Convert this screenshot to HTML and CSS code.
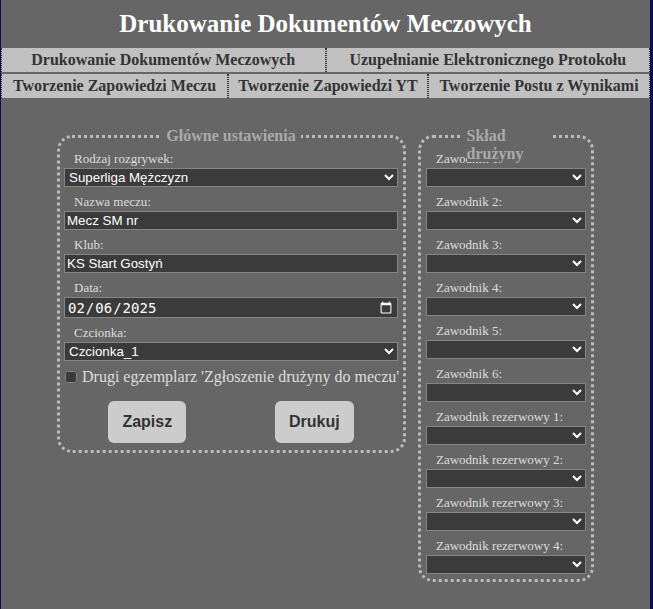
FILE: index.html
```html
<!DOCTYPE html>
<html lang="pl">
<head>
<meta charset="utf-8">
<title>Drukowanie Dokumentów Meczowych</title>
<link rel="stylesheet" href="styles.css">
</head>
<body>
<div class="page">
  <h1 class="title">Drukowanie Dokumentów Meczowych</h1>
  <nav class="tabs">
    <div class="tab-row tab-row-two">
      <button class="tab">Drukowanie Dokumentów Meczowych</button>
      <button class="tab">Uzupełnianie Elektronicznego Protokołu</button>
    </div>
    <div class="tab-row tab-row-three">
      <button class="tab">Tworzenie Zapowiedzi Meczu</button>
      <button class="tab">Tworzenie Zapowiedzi YT</button>
      <button class="tab">Tworzenie Postu z Wynikami</button>
    </div>
  </nav>
  <main class="panels">
    <fieldset class="panel panel-main">
      <legend class="panel-title"><span class="panel-title-text">Główne ustawienia</span></legend>
      <div class="field">
        <label class="field-label">Rodzaj rozgrywek:</label>
        <select class="control"><option>Superliga Mężczyzn</option></select>
      </div>
      <div class="field">
        <label class="field-label">Nazwa meczu:</label>
        <input class="control" type="text" value="Mecz SM nr">
      </div>
      <div class="field">
        <label class="field-label">Klub:</label>
        <input class="control" type="text" value="KS Start Gostyń">
      </div>
      <div class="field">
        <label class="field-label">Data:</label>
        <input class="control control-date" type="date" value="2025-02-06">
      </div>
      <div class="field">
        <label class="field-label">Czcionka:</label>
        <select class="control"><option>Czcionka_1</option></select>
      </div>
      <label class="check"><input class="check-box" type="checkbox">Drugi egzemplarz 'Zgłoszenie drużyny do meczu'</label>
      <div class="actions">
        <button class="action">Zapisz</button>
        <button class="action">Drukuj</button>
      </div>
    </fieldset>
    <fieldset class="panel panel-team">
      <legend class="panel-title panel-title-narrow"><span class="panel-title-text">Skład drużyny</span></legend>
      <div class="field"><label class="field-label">Zawodnik 1:</label><select class="control"><option></option></select></div>
      <div class="field"><label class="field-label">Zawodnik 2:</label><select class="control"><option></option></select></div>
      <div class="field"><label class="field-label">Zawodnik 3:</label><select class="control"><option></option></select></div>
      <div class="field"><label class="field-label">Zawodnik 4:</label><select class="control"><option></option></select></div>
      <div class="field"><label class="field-label">Zawodnik 5:</label><select class="control"><option></option></select></div>
      <div class="field"><label class="field-label">Zawodnik 6:</label><select class="control"><option></option></select></div>
      <div class="field"><label class="field-label">Zawodnik rezerwowy 1:</label><select class="control"><option></option></select></div>
      <div class="field"><label class="field-label">Zawodnik rezerwowy 2:</label><select class="control"><option></option></select></div>
      <div class="field"><label class="field-label">Zawodnik rezerwowy 3:</label><select class="control"><option></option></select></div>
      <div class="field"><label class="field-label">Zawodnik rezerwowy 4:</label><select class="control"><option></option></select></div>
    </fieldset>
  </main>
</div>
</body>
</html>
```

FILE: styles.css
```css
html, body {
  margin: 0;
  padding: 0;
}

body {
  background: #0b0b57;
  font-family: "Liberation Serif", "Times New Roman", serif;
}

.page {
  background: #666666;
  margin: 0 3px 0 1px;
  min-height: 100vh;
  overflow: hidden;
}

.title {
  margin: 0;
  padding: 9px 0 10px;
  text-align: center;
  color: #ffffff;
  font-size: 25px;
  font-weight: bold;
  line-height: 29px;
}

.tabs {
  display: flex;
  flex-direction: column;
  gap: 2px;
}

.tab-row {
  display: grid;
}

.tab-row-two {
  grid-template-columns: 1fr 1fr;
}

.tab-row-three {
  grid-template-columns: 227fr 200fr 222fr;
}

.tab {
  font-family: "Liberation Serif", "Times New Roman", serif;
  font-size: 16px;
  font-weight: bold;
  color: #333333;
  background: #c0c0c0;
  border: 0;
  border-left: 1px dotted #333333;
  border-right: 1px dotted #333333;
  height: 24px;
  padding: 0;
  margin: 0;
  white-space: nowrap;
}

.panels {
  display: flex;
  justify-content: center;
  align-items: flex-start;
  gap: 12px;
  margin-top: 29px;
}

.panel {
  margin: 0;
  border: 3px dotted #bbbbbb;
  border-radius: 15px;
  padding: 6px 5px 7px 4px;
  min-width: 0;
}

.panel-main {
  width: 334px;
}

.panel-team {
  width: 160px;
  padding: 6px 5px 5px 5px;
}

.panel-title {
  margin: 0 auto;
  padding: 0 5px;
  color: #aaaaaa;
  font-size: 16px;
  font-weight: bold;
  line-height: 18px;
}

.panel-title-narrow {
  width: 79px;
  height: 18px;
  position: relative;
  z-index: 1;
}

.panel-title-text {
  background: #666666;
}

.field {
  margin-bottom: 7px;
}

.panel-team .field:last-child {
  margin-bottom: 0;
}

.field-label {
  display: block;
  padding-left: 10px;
  font-size: 13px;
  line-height: 15px;
  color: #dddddd;
  margin-bottom: 2px;
}

.control {
  display: block;
  width: 100%;
  box-sizing: border-box;
  height: 19px;
  margin: 0;
  color-scheme: dark;
  background-color: #3b3b3b;
  color: #ffffff;
  border: 1px solid #858585;
  font-family: "Liberation Sans", Arial, sans-serif;
  font-size: 13.33px;
}

.control-date {
  height: 21px;
  font-family: "DejaVu Sans Mono", monospace;
  font-size: 14px;
  padding: 0 2px;
}

.check {
  display: flex;
  align-items: center;
  font-size: 16px;
  line-height: 18px;
  color: #dddddd;
  white-space: nowrap;
}

.check-box {
  color-scheme: dark;
  width: 12px;
  height: 12px;
  margin: 0 5px 0 1px;
}

.actions {
  display: flex;
  justify-content: space-around;
  margin-top: 15px;
}

.action {
  font-family: "Liberation Sans", Arial, sans-serif;
  font-size: 16px;
  font-weight: bold;
  color: #333333;
  background: #cccccc;
  border: 0;
  border-radius: 6px;
  height: 42px;
  padding: 0 14px;
}
```
